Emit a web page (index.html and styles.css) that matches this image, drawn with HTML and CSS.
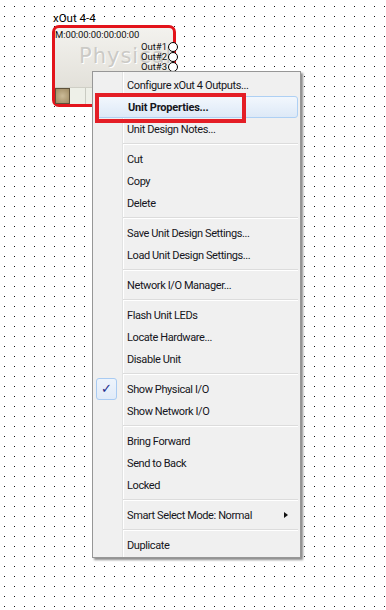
FILE: index.html
```html
<!DOCTYPE html>
<html lang="en">
<head>
  <meta charset="UTF-8" />
  <title>Unit context menu</title>
  <link rel="stylesheet" href="styles.css">
</head>
<body>

  <div class="canvas">

    <div class="unit">
      <div class="unit-title">xOut 4-4</div>
      <div class="unit-body">
        <div class="mac">M:00:00:00:00:00:00</div>
        <div class="watermark">Physical</div>
        <div class="outs">
          <div class="out">Out#1<span class="port"></span></div>
          <div class="out">Out#2<span class="port"></span></div>
          <div class="out">Out#3<span class="port"></span></div>
        </div>
        <div class="strip">
          <span class="led"></span>
          <span class="cell"></span>
          <span class="cell"></span>
          <span class="cell"></span>
        </div>
      </div>
    </div>

    <div class="menu">
      <div class="item">Configure xOut 4 Outputs...</div>
      <div class="item active"><b>Unit Properties...</b></div>
      <div class="item">Unit Design Notes...</div>
      <div class="sep"></div>
      <div class="item">Cut</div>
      <div class="item">Copy</div>
      <div class="item">Delete</div>
      <div class="sep"></div>
      <div class="item">Save Unit Design Settings...</div>
      <div class="item">Load Unit Design Settings...</div>
      <div class="sep"></div>
      <div class="item">Network I/O Manager...</div>
      <div class="sep"></div>
      <div class="item">Flash Unit LEDs</div>
      <div class="item">Locate Hardware...</div>
      <div class="item">Disable Unit</div>
      <div class="sep"></div>
      <div class="item checked"><span class="check">&#10003;</span>Show Physical I/O</div>
      <div class="item">Show Network I/O</div>
      <div class="sep"></div>
      <div class="item">Bring Forward</div>
      <div class="item">Send to Back</div>
      <div class="item">Locked</div>
      <div class="sep"></div>
      <div class="item submenu">Smart Select Mode: Normal<span class="arrow"></span></div>
      <div class="sep"></div>
      <div class="item">Duplicate</div>
    </div>

    <div class="callout"></div>
  </div>

</body>
</html>
```

FILE: styles.css
```css
body {
  margin: 0;
  background: #fff;
  font-family: Roboto, 'Open Sans', sans-serif;
}

.canvas {
  position: relative;
  width: 386px;
  height: 610px;
  overflow: hidden;
}

/* dotted design grid */
.canvas::before {
  content: "";
  position: absolute;
  inset: 0;
  background: linear-gradient(90deg, #111 1px, transparent 1px) 4px 0 / 10px 10px;
  -webkit-mask: linear-gradient(#000 1px, transparent 1px) 0 6px / 10px 10px;
  mask: linear-gradient(#000 1px, transparent 1px) 0 6px / 10px 10px;
}

/* unit block on the canvas */
.unit {
  position: absolute;
  left: 52px;
  top: 12px;
  width: 124px;
}

.unit-title {
  height: 13px;
  font-size: 11.5px;
  line-height: 13px;
  padding-left: 1px;
  color: #000;
}

.unit-body {
  position: relative;
  height: 76px;
  border: 3px solid #e3141b;
  border-radius: 7px;
  background: linear-gradient(#f3f2ee, #e2e0d9 80%);
  display: flex;
  flex-direction: column;
}

.mac {
  font-size: 9.5px;
  line-height: 11px;
  padding: 1px 0 0 0;
  letter-spacing: -0.1px;
  color: #111;
}

.watermark {
  position: absolute;
  left: 24px;
  top: 16px;
  font-family: 'DejaVu Sans', sans-serif;
  font-size: 21px;
  letter-spacing: 1px;
  color: #cbcac6;
  text-shadow: 1px 1px 0 #fff;
}

.outs {
  position: relative;
  margin-top: 2px;
  display: flex;
  flex-direction: column;
  align-items: flex-end;
}

.out {
  height: 10px;
  font-size: 9.5px;
  line-height: 10px;
  color: #111;
  display: flex;
  align-items: center;
}

.port {
  width: 8px;
  height: 8px;
  margin: 0 -5px 0 1px;
  border: 1px solid #000;
  border-radius: 50%;
  background: #fff;
}

.strip {
  margin-top: auto;
  height: 16px;
  display: flex;
  background: #eef0e8;
  border-top: 1px solid #cfcfc6;
}

.led {
  width: 13px;
  height: 14px;
  border: 1px solid #5e513a;
  background: radial-gradient(circle, #cbbb98, #9e8a62);
}

.cell {
  width: 15px;
  border-right: 1px solid #c9cbc2;
}

/* context menu */
.menu {
  position: absolute;
  left: 92px;
  top: 71px;
  width: 207px;
  padding: 2px 0 1px;
  border: 1px solid #979797;
  background:
    linear-gradient(90deg, transparent 29px, #e2e3e3 29px, #e2e3e3 30px, #fff 30px, #fff 31px, transparent 31px),
    #f0f0f0;
  box-shadow: 2px 2px 2px rgba(0, 0, 0, 0.45);
  font-size: 11px;
  letter-spacing: -0.4px;
  color: #151520;
}

.item {
  position: relative;
  height: 22px;
  margin: 0 2px;
  padding-left: 32px;
  display: flex;
  align-items: center;
  white-space: nowrap;
}

.item b {
  font-weight: 700;
  letter-spacing: -0.2px;
}

.item.active {
  margin: 0 2px 0 3px;
  padding-left: 31px;
  height: 20px;
  border: 1px solid #aed0f4;
  border-radius: 3px;
  background: linear-gradient(#f2f7fd, #dde9f7);
}

.check {
  position: absolute;
  left: 1px;
  top: 0;
  width: 19px;
  height: 20px;
  border: 1px solid #a9cbf2;
  border-radius: 3px;
  background: linear-gradient(#eef4fc, #e1ebf8);
  color: #1d2c8c;
  font-family: 'DejaVu Sans', sans-serif;
  font-size: 13px;
  line-height: 20px;
  letter-spacing: 0;
  text-align: center;
}

.arrow {
  position: absolute;
  right: 10px;
  top: 8px;
  border-left: 4px solid #111;
  border-top: 3.5px solid transparent;
  border-bottom: 3.5px solid transparent;
}

.sep {
  height: 8px;
  margin: 0 2px 0 30px;
  background: linear-gradient(transparent 3px, #dcdcdc 3px, #dcdcdc 4px, #fff 4px, #fff 5px, transparent 5px);
}

/* red annotation box over the menu */
.callout {
  position: absolute;
  left: 95px;
  top: 93px;
  width: 143px;
  height: 22px;
  border: 4px solid #e41e26;
}
```
